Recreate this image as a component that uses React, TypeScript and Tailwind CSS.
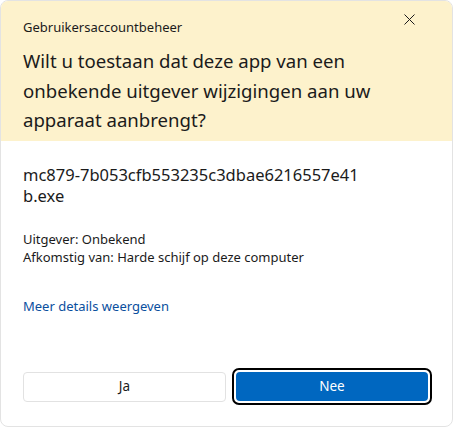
import React from 'react';

const App: React.FC = () => {
  return (
    <div className="w-[453px] h-[427px] bg-white" style={{ fontFamily: '"Noto Sans", "Open Sans", sans-serif' }}>
      <div className="relative w-full h-full rounded-lg border border-[#e3e3e3] overflow-hidden bg-white text-[#1b1b1b]">
        <section className="bg-[#fdf2cc] h-[140px] px-[22px] pt-[17px]">
          <div className="text-[13px] leading-[18px]">Gebruikersaccountbeheer</div>
          <h1 className="mt-[10px] text-[18.6px] leading-[29.5px] font-normal">
            Wilt u toestaan dat deze app van een
            <br />
            onbekende uitgever wijzigingen aan uw
            <br />
            apparaat aanbrengt?
          </h1>
        </section>

        <button className="absolute right-[37px] top-[12px] w-[12px] h-[12px] flex items-center justify-center">
          <svg width="11" height="11" viewBox="0 0 11 11" fill="none" stroke="#1b1b1b" strokeWidth="1">
            <path d="M0.5 0.5 L10.5 10.5 M10.5 0.5 L0.5 10.5" />
          </svg>
        </button>

        <section className="px-[22px] pt-[23px]">
          <div className="text-[16.5px] leading-[21px]">
            mc879-7b053cfb553235c3dbae6216557e41
            <br />
            b.exe
          </div>
          <div className="mt-[24px] text-[13px] leading-[18px]">
            <div>Uitgever: Onbekend</div>
            <div>Afkomstig van: Harde schijf op deze computer</div>
          </div>
          <div className="mt-[31px] text-[13px] leading-[18px] text-[#0a4f9e]">Meer details weergeven</div>
        </section>

        <div className="absolute left-[22px] top-[367px] flex items-center gap-[6px]">
          <button className="w-[203px] h-[30px] rounded-[4px] border border-[#e2e2e2] bg-white text-[13.5px]">Ja</button>
          <div className="w-[200px] h-[37px] rounded-[7px] border-2 border-black p-[2px] bg-white">
            <button className="w-full h-full rounded-[4px] bg-[#0067c0] text-white text-[13.5px]">Nee</button>
          </div>
        </div>
      </div>
    </div>
  );
};

export default App;
